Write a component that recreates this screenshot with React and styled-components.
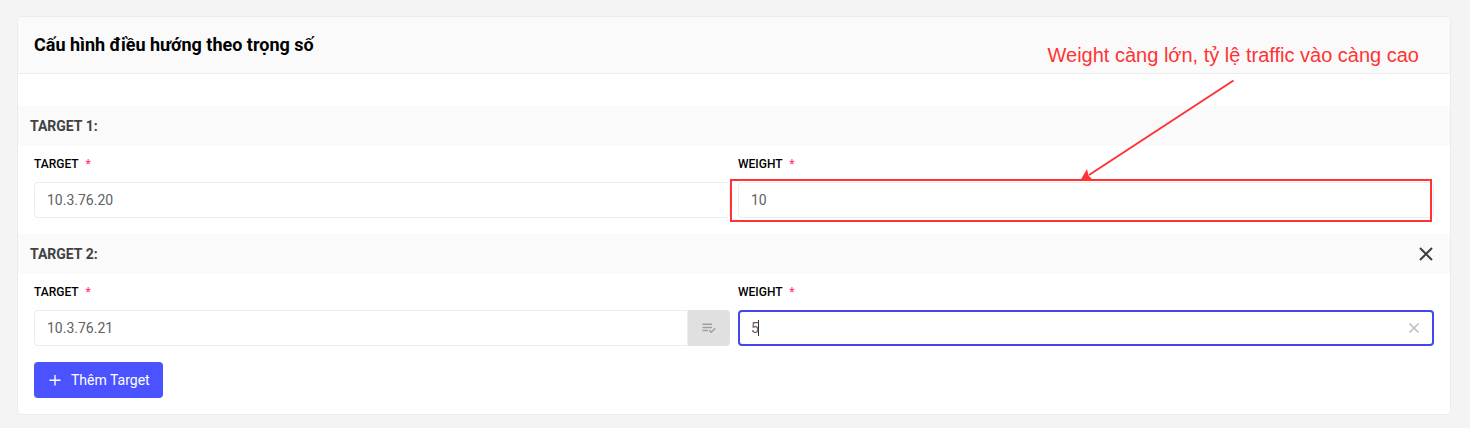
import React, { useState } from "react";
import styled, { createGlobalStyle, css } from "styled-components";

const GlobalStyle = createGlobalStyle`
  * {
    box-sizing: border-box;
  }

  body {
    margin: 0;
    background-color: #f4f4f4;
    font-family: Roboto, sans-serif;
    font-size: 14px;
    line-height: 20px;
    color: #000;
  }

  button,
  input {
    font: inherit;
  }
`;

const SPage = styled.main`
  padding: 16px 19px 12px 17px;
`;

const SCard = styled.section`
  position: relative;
  background-color: #fff;
  border: 1px solid #ececec;
  border-radius: 4px;
`;

const SCardHeader = styled.header`
  padding: 16px;
  background-color: #fafafa;
  border-bottom: 1px solid #ececec;
  border-radius: 3px 3px 0 0;

  h1 {
    margin: 0;
    font-size: 18px;
    font-weight: 700;
    line-height: 24px;
  }
`;

const SForm = styled.form`
  padding: 32px 0 16px;
`;

const STargetBar = styled.div`
  display: flex;
  align-items: center;
  justify-content: space-between;
  height: 40px;
  padding: 0 12px;
  background-color: #fafafa;

  h2 {
    margin: 0;
    font-size: 14px;
    font-weight: 700;
    line-height: 20px;
    color: #424242;
  }
`;

const SRemoveButton = styled.button`
  display: flex;
  padding: 4px;
  border: 0;
  background: none;
  color: #3a3b45;
  cursor: pointer;
`;

const SFieldsRow = styled.div`
  display: grid;
  grid-template-columns: repeat(2, 1fr);
  column-gap: 8px;
  padding: 8px 16px 16px;
`;

const SField = styled.div`
  min-width: 0;
`;

const SLabel = styled.label`
  display: block;
  margin-bottom: 8px;
  font-size: 12px;
  font-weight: 500;
  text-transform: uppercase;

  span {
    margin-left: 4px;
    color: #ff3d71;
  }
`;

const SInputWrapper = styled.div`
  position: relative;
  display: flex;
  height: 36px;
`;

const SInput = styled.input`
  flex: 1;
  min-width: 0;
  padding: 0 12px;
  border: 1px solid #ececec;
  border-radius: 4px;
  outline: none;
  background-color: #fff;
  color: #616161;

  ${({ $hasAddon }) =>
    $hasAddon &&
    css`
      border-radius: 4px 0 0 4px;
    `}

  ${({ $active }) =>
    $active &&
    css`
      padding: 0 11px;
      border: 2px solid #4349e8;
    `}
`;

const SAddonButton = styled.button`
  display: flex;
  align-items: center;
  justify-content: center;
  width: 42px;
  padding: 0;
  border: 0;
  border-radius: 0 4px 4px 0;
  background-color: #e0e0e0;
  color: #9e9e9e;
`;

const SClearButton = styled.button`
  position: absolute;
  top: 0;
  right: 14px;
  display: flex;
  align-items: center;
  height: 100%;
  padding: 0;
  border: 0;
  background: none;
  color: #bdbdbd;
`;

const SCaret = styled.span`
  position: absolute;
  top: 10px;
  left: 20px;
  width: 1px;
  height: 16px;
  background-color: #333;
`;

const SAddButton = styled.button`
  display: flex;
  align-items: center;
  gap: 10px;
  height: 36px;
  margin-left: 16px;
  padding: 0 13px 0 15px;
  border: 0;
  border-radius: 4px;
  background-color: #4a53ff;
  color: #fff;
  cursor: pointer;
`;

const SNote = styled.p`
  position: absolute;
  top: 26px;
  right: 31px;
  margin: 0;
  font-family: "Liberation Sans", Arial, sans-serif;
  font-size: 20px;
  line-height: 24px;
  color: #ff3333;
`;

const SHighlight = styled.div`
  position: absolute;
  inset: -3px 2px -4px -8px;
  border: 2px solid #ff3333;
  pointer-events: none;
`;

const SArrow = styled.svg`
  position: absolute;
  right: 195px;
  bottom: 100%;
`;

const CrossIcon = ({ size, width }) => (
  <svg width={size} height={size} viewBox="0 0 16 16" aria-hidden="true">
    <path
      d="M2 2l12 12M14 2L2 14"
      fill="none"
      stroke="currentColor"
      strokeWidth={width}
    />
  </svg>
);

const PlusIcon = () => (
  <svg width="12" height="12" viewBox="0 0 12 12" aria-hidden="true">
    <path
      d="M6 1v10.500M.5 6.250h11"
      fill="none"
      stroke="currentColor"
      strokeWidth="1.400"
    />
  </svg>
);

const ListCheckIcon = () => (
  <svg width="14" height="12" viewBox="0 0 14 12" aria-hidden="true">
    <path
      d="M.5 2.200h9.500M.5 5.400h9.500M.5 8.600h5.500M7.200 8.200l2 2 4-4"
      fill="none"
      stroke="currentColor"
      strokeWidth="1.500"
    />
  </svg>
);

const Highlight = () => (
  <SHighlight>
    <SArrow width="156" height="104" viewBox="0 0 156 104" aria-hidden="true">
      <path d="M154.500 3.500L10 98" fill="none" stroke="#ff3333" strokeWidth="2" />
      <path d="M1 104l7-12 1.500 6.500L14 103z" fill="#ff3333" />
    </SArrow>
  </SHighlight>
);

const Field = ({ id, label, defaultValue, hasAddon, active, highlighted }) => {
  const [value, setValue] = useState(defaultValue);

  return (
    <SField>
      <SLabel htmlFor={id}>
        {label} <span>*</span>
      </SLabel>
      <SInputWrapper>
        <SInput
          id={id}
          value={value}
          onChange={(e) => setValue(e.target.value)}
          $hasAddon={hasAddon}
          $active={active}
        />
        {hasAddon ? (
          <SAddonButton type="button" aria-label="Chọn target">
            <ListCheckIcon />
          </SAddonButton>
        ) : null}
        {active ? (
          <>
            <SCaret />
            <SClearButton
              type="button"
              aria-label="Xóa"
              onClick={() => setValue("")}
            >
              <CrossIcon size={12} width={2} />
            </SClearButton>
          </>
        ) : null}
        {highlighted ? <Highlight /> : null}
      </SInputWrapper>
    </SField>
  );
};

const App = () => (
  <>
    <GlobalStyle />
    <SPage>
      <SCard>
        <SCardHeader>
          <h1>Cấu hình điều hướng theo trọng số</h1>
        </SCardHeader>
        <SForm>
          <STargetBar>
            <h2>TARGET 1:</h2>
          </STargetBar>
          <SFieldsRow>
            <Field id="target-1" label="Target" defaultValue="10.3.76.20" />
            <Field
              id="weight-1"
              label="Weight"
              defaultValue="10"
              highlighted
            />
          </SFieldsRow>
          <STargetBar>
            <h2>TARGET 2:</h2>
            <SRemoveButton type="button" aria-label="Xóa target 2">
              <CrossIcon size={16} width={2} />
            </SRemoveButton>
          </STargetBar>
          <SFieldsRow>
            <Field
              id="target-2"
              label="Target"
              defaultValue="10.3.76.21"
              hasAddon
            />
            <Field id="weight-2" label="Weight" defaultValue="5" active />
          </SFieldsRow>
          <SAddButton type="button">
            <PlusIcon />
            Thêm Target
          </SAddButton>
        </SForm>
        <SNote>Weight càng lớn, tỷ lệ traffic vào càng cao</SNote>
      </SCard>
    </SPage>
  </>
);

export default App;
